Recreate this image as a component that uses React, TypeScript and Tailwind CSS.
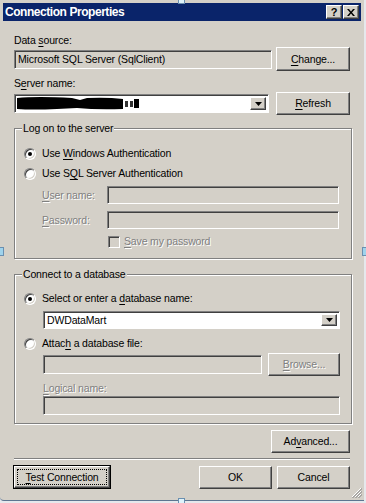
import React from "react";

const raised =
  "bg-[#d4d0c8] border border-t-white border-l-white border-b-[#404040] border-r-[#404040] shadow-[inset_-1px_-1px_0_#808080]";
const sunken =
  "border border-t-[#808080] border-l-[#808080] border-b-white border-r-white shadow-[inset_1px_1px_0_#404040]";
const dim = "text-[#808080] [text-shadow:1px_1px_0_#fff]";

const U: React.FC<{ children: React.ReactNode }> = ({ children }) => (
  <span className="underline underline-offset-[2px] decoration-[1px]">{children}</span>
);

const Button: React.FC<{
  w: string;
  h?: string;
  disabled?: boolean;
  children: React.ReactNode;
}> = ({ w, h = "h-[23px]", disabled, children }) => (
  <div className={`${raised} ${w} ${h} flex items-center justify-center ${disabled ? dim : ""}`}>
    {children}
  </div>
);

const DropArrow = () => (
  <div className={`${raised} w-[16px] h-full flex items-center justify-center`}>
    <svg width="7" height="4" viewBox="0 0 7 4">
      <path d="M0 0h7L3.5 4z" fill="#000" />
    </svg>
  </div>
);

const Radio: React.FC<{ checked?: boolean }> = ({ checked }) => (
  <div className="w-[12px] h-[12px] rounded-full bg-white border border-t-[#808080] border-l-[#808080] border-b-white border-r-white shadow-[inset_1px_1px_0_#404040,inset_-1px_-1px_0_#d4d0c8] flex items-center justify-center">
    {checked && <div className="w-[4px] h-[4px] rounded-full bg-black" />}
  </div>
);

const GroupBox: React.FC<{ title: string; h: string; children: React.ReactNode }> = ({
  title,
  h,
  children,
}) => (
  <div
    className={`w-[338px] ${h} border border-[#808080] shadow-[inset_1px_1px_0_#fff,1px_1px_0_#fff] flex flex-col`}>
    <span className="-mt-[7px] ml-[7px] px-[1px] w-fit bg-[#d4d0c8] leading-[13px]">{title}</span>
    {children}
  </div>
);

export default function App() {
  return (
    <div
      className="relative w-[366px] h-[503px] bg-[#e6e8ec] overflow-hidden text-[10.5px] tracking-[-0.15px] leading-[13px] text-black"
      style={{ fontFamily: '"Liberation Sans", Arial, sans-serif' }}>
      <div className="relative w-[364px] h-[501px] bg-[#d4d0c8] border-b border-[#5d7590] rounded-bl-[4px] pt-[3px] flex flex-col">
        {/* title bar */}
        <div className="shrink-0 mx-[3px] h-[18px] bg-[#0a246a] flex items-center pl-[2px] pr-[2px]">
          <span className="text-white font-bold text-[12px] tracking-[-0.45px] mt-[1px]">Connection Properties</span>
          <div className="ml-auto flex gap-[1px]">
            <div className={`${raised} w-[16px] h-[14px] flex items-center justify-center font-bold text-[11px] leading-none`}>
              ?
            </div>
            <div className={`${raised} w-[16px] h-[14px] flex items-center justify-center`}>
              <svg width="8" height="7" viewBox="0 0 8 7">
                <path d="M0 0h2l2 2.5L6 0h2L5 3.5 8 7H6L4 4.5 2 7H0l3-3.5z" fill="#000" />
              </svg>
            </div>
          </div>
        </div>

        <div className="shrink-0 px-[14px] pt-[13px] flex flex-col">
          <div>
            Data <U>s</U>ource:
          </div>
          <div className="h-[24px] flex items-center justify-between">
            <div className={`${sunken} w-[258px] h-[19px] bg-[#d4d0c8] flex items-center pl-[3px]`}>
              Microsoft SQL Server (SqlClient)
            </div>
            <Button w="w-[74px]" h="h-[24px]">
              <span>
                <U>C</U>hange...
              </span>
            </Button>
          </div>

          <div className="mt-[6px]">
            S<U>e</U>rver name:
          </div>
          <div className="mt-[2px] flex items-center justify-between">
            <div className={`${sunken} w-[255px] h-[19px] bg-white flex items-center p-[2px]`}>
              <svg width="122" height="13" viewBox="0 0 122 13" className="shrink-0">
                <path d="M0 1 Q20 -1 55 1 L63 3 L70 1 Q90 0 106 2 L106 12 Q80 13 60 11 L40 12 Q15 13 0 12z" fill="#000" />
                <path d="M108 4 h3 v6 h-3z M113 4 h3 v6 h-3z" fill="#333" />
                <path d="M117 2 h5 v9 h-5z" fill="#000" />
              </svg>
              <div className="ml-auto h-full">
                <DropArrow />
              </div>
            </div>
            <Button w="w-[74px]">
              <span>
                <U>R</U>efresh
              </span>
            </Button>
          </div>

          {/* Log on group */}
          <div className="mt-[13px]">
            <GroupBox title="Log on to the server" h="h-[131px]">
              <div className="mt-[12px] ml-[9px] flex items-center gap-[6px]">
                <Radio checked />
                <span>
                  Use <U>W</U>indows Authentication
                </span>
              </div>
              <div className="mt-[7px] ml-[9px] flex items-center gap-[6px]">
                <Radio />
                <span>
                  Use S<U>Q</U>L Server Authentication
                </span>
              </div>
              <div className="mt-[6px] ml-[27px] flex items-center">
                <span className={`w-[65px] ${dim}`}>
                  <U>U</U>ser name:
                </span>
                <div className={`${sunken} w-[232px] h-[18px] bg-[#d4d0c8]`} />
              </div>
              <div className="mt-[7px] ml-[27px] flex items-center">
                <span className={`w-[65px] ${dim}`}>
                  <U>P</U>assword:
                </span>
                <div className={`${sunken} w-[232px] h-[18px] bg-[#d4d0c8]`} />
              </div>
              <div className="mt-[6px] ml-[93px] flex items-center gap-[4px]">
                <div className={`${sunken} w-[12px] h-[12px] bg-[#d4d0c8]`} />
                <span className={dim}>
                  <U>S</U>ave my password
                </span>
              </div>
            </GroupBox>
          </div>

          {/* Connect group */}
          <div className="mt-[15px]">
            <GroupBox title="Connect to a database" h="h-[150px]">
              <div className="mt-[11px] ml-[9px] flex items-center gap-[6px]">
                <Radio checked />
                <span>
                  Select or enter a <U>d</U>atabase name:
                </span>
              </div>
              <div className={`mt-[6px] ml-[28px] ${sunken} w-[297px] h-[18px] bg-white flex items-center p-[2px]`}>
                <span className="pl-[1px]">DWDataMart</span>
                <div className="ml-auto h-full">
                  <DropArrow />
                </div>
              </div>
              <div className="mt-[8px] ml-[9px] flex items-center gap-[6px]">
                <Radio />
                <span>
                  Attac<U>h</U> a database file:
                </span>
              </div>
              <div className="mt-[3px] ml-[28px] w-[297px] flex items-center justify-between">
                <div className={`${sunken} w-[219px] h-[19px] bg-[#d4d0c8]`} />
                <Button w="w-[72px]" disabled>
                  <span>
                    <U>B</U>rowse...
                  </span>
                </Button>
              </div>
              <div className={`mt-[6px] ml-[28px] ${dim}`}>
                <U>L</U>ogical name:
              </div>
              <div className={`mt-[1px] ml-[28px] ${sunken} w-[297px] h-[19px] bg-[#d4d0c8]`} />
            </GroupBox>
          </div>

          <div className="mt-[6px] self-end">
            <Button w="w-[79px]">
              <span>
                Ad<U>v</U>anced...
              </span>
            </Button>
          </div>

          <div className="mt-[5px] h-[2px] border-t border-t-[#808080] border-b border-b-white" />

          <div className="mt-[5px] flex items-center">
            <div className="-ml-[1px] border border-black">
              <div className={`${raised} w-[96px] h-[22px] flex items-center justify-center p-[2px]`}>
                <div className="w-full h-full border border-dotted border-black flex items-center justify-center">
                  <span>
                    <U>T</U>est Connection
                  </span>
                </div>
              </div>
            </div>
            <div className="ml-auto flex gap-[5px]">
              <Button w="w-[73px]">OK</Button>
              <Button w="w-[73px]">Cancel</Button>
            </div>
          </div>
        </div>

        {/* size grip in the corner */}
        <svg width="11" height="11" viewBox="0 0 11 11" className="absolute right-[2px] bottom-[2px]">
          <path d="M10 1L1 10M10 4L4 10M10 7L7 10" stroke="#fff" strokeWidth="1" />
          <path d="M11 1L1 11M11 4L4 11M11 7L7 11" stroke="#808080" strokeWidth="1" transform="translate(0.5 0)" />
        </svg>
      </div>

      {/* designer selection handles */}
      <div className="absolute left-[178px] top-[-3px] w-[7px] h-[7px] bg-[#dff3fb] border border-[#6a8fb0]" />
      <div className="absolute left-[178px] top-[498px] w-[7px] h-[7px] bg-[#dff3fb] border border-[#6a8fb0]" />
      <div className="absolute left-[-3px] top-[247px] w-[7px] h-[9px] bg-[#9fd3ec] border border-[#6a8fb0]" />
      <div className="absolute left-[362px] top-[247px] w-[7px] h-[9px] bg-[#9fd3ec] border border-[#6a8fb0]" />
    </div>
  );
}
